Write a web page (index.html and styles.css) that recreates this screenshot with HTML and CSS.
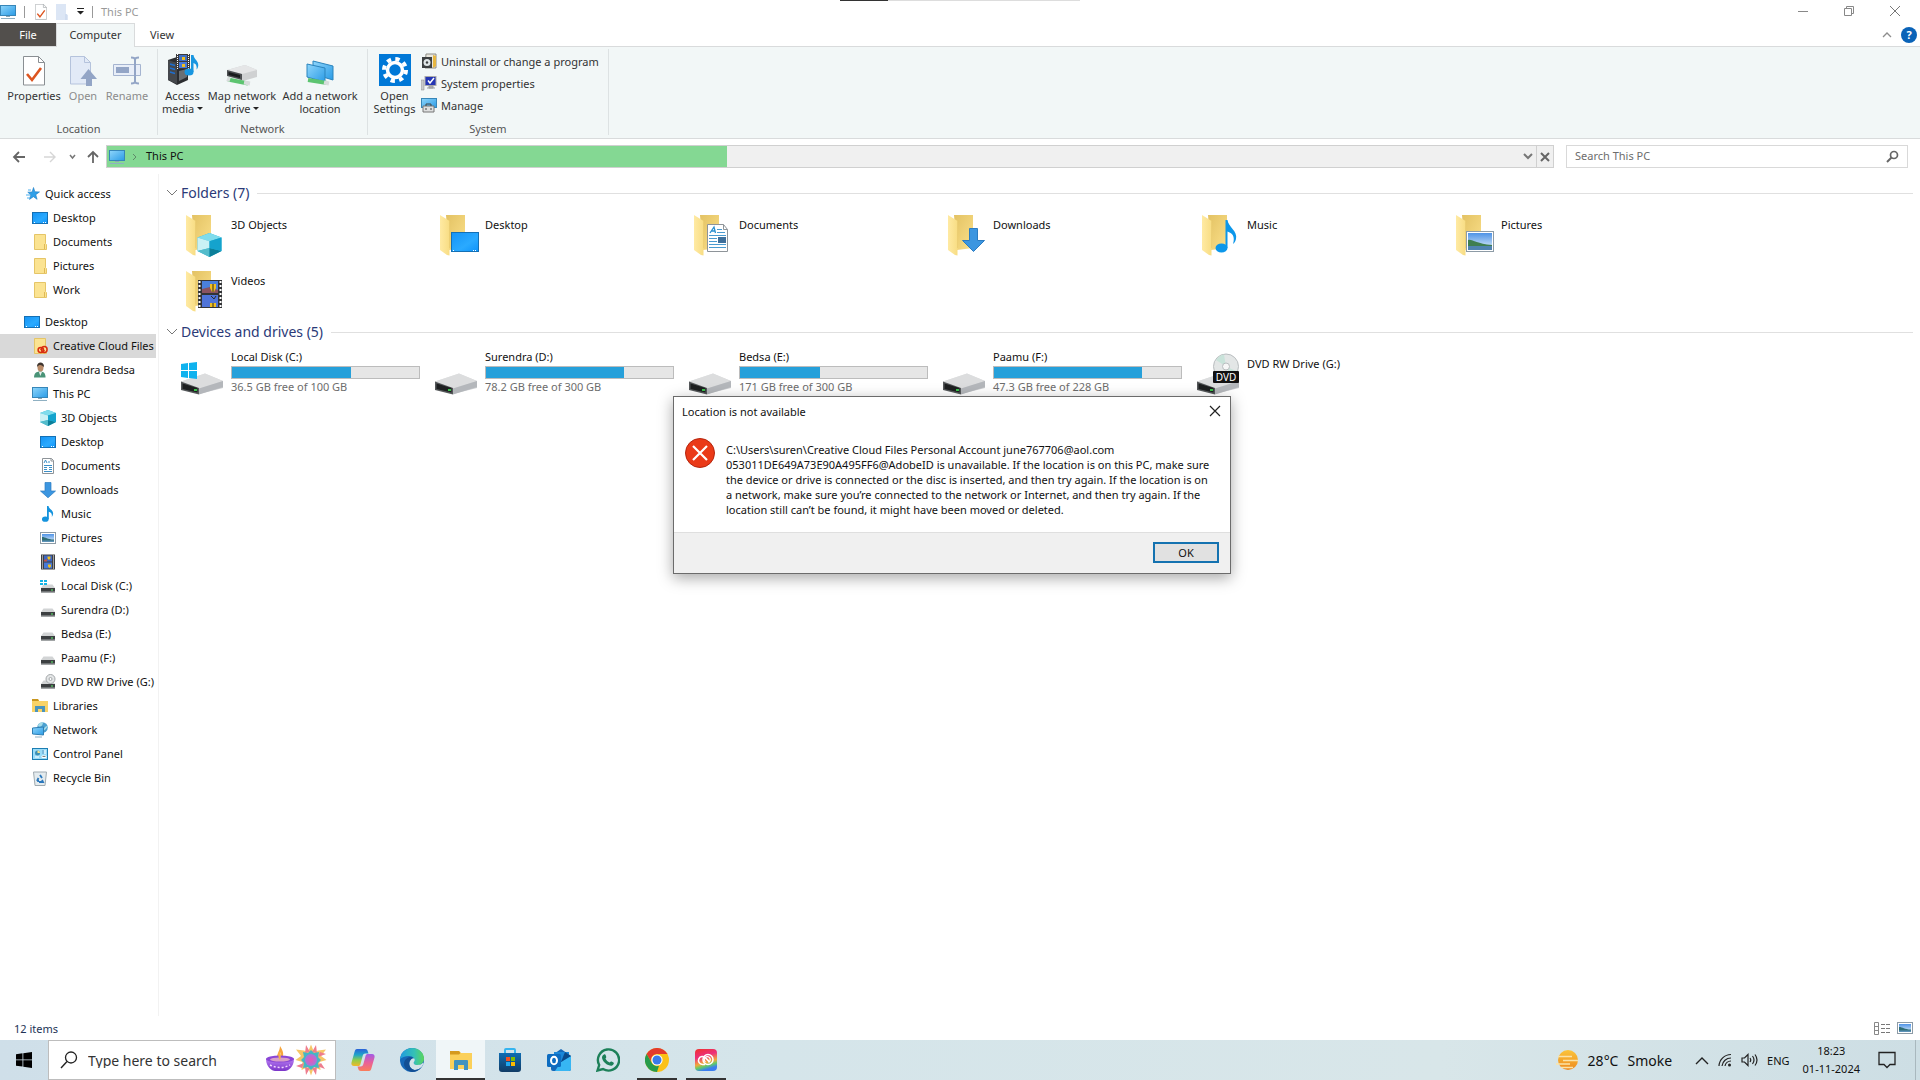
FILE: index.html
```
<!DOCTYPE html>
<html lang="en">
<head>
    <meta charset="UTF-8">
    <meta name="viewport" content="width=device-width, initial-scale=1.0">
    <title>This PC</title>
    <link rel="stylesheet" href="styles.css">
</head>
<body>

    <!-- ICON SPRITE -->
    <svg class="sprite" width="0" height="0" aria-hidden="true">
        <defs>
            <linearGradient id="gScreen" x1="0" y1="0" x2="1" y2="1"><stop offset="0" stop-color="#8fd6fb"/><stop offset="1" stop-color="#2a9be6"/></linearGradient>
            <linearGradient id="gDesk" x1="0" y1="0" x2="1" y2="1"><stop offset="0" stop-color="#1493f5"/><stop offset=".6" stop-color="#2aaaff"/><stop offset="1" stop-color="#0d93fb"/></linearGradient>
            <linearGradient id="gFront" x1="0" y1="0" x2="1" y2="0"><stop offset="0" stop-color="#ffeaa3"/><stop offset="1" stop-color="#f8dd84"/></linearGradient>
            <linearGradient id="gBack" x1="0" y1="0" x2="1" y2="1"><stop offset="0" stop-color="#e3c263"/><stop offset="1" stop-color="#fbe08a"/></linearGradient>
            <linearGradient id="gDrive" x1="0" y1="0" x2="1" y2="1"><stop offset="0" stop-color="#efefef"/><stop offset="1" stop-color="#c3c5c9"/></linearGradient>
            <linearGradient id="gSky" x1="0" y1="0" x2="0" y2="1"><stop offset="0" stop-color="#4f93e6"/><stop offset="1" stop-color="#e4f2fb"/></linearGradient>
            <linearGradient id="gEdge" x1="0" y1="0" x2="1" y2="0"><stop offset="0" stop-color="#1f9be0"/><stop offset=".6" stop-color="#35c1b5"/><stop offset="1" stop-color="#5bd65a"/></linearGradient>
            <linearGradient id="gStore" x1="0" y1="0" x2="0" y2="1"><stop offset="0" stop-color="#0f6cb2"/><stop offset="1" stop-color="#123c66"/></linearGradient>
            <linearGradient id="gCopA" x1="0" y1="0" x2="0" y2="1"><stop offset="0" stop-color="#2a62d8"/><stop offset=".35" stop-color="#1fa6c9"/><stop offset=".65" stop-color="#8fce4a"/><stop offset="1" stop-color="#f2b82a"/></linearGradient>
            <linearGradient id="gCopB" x1="0" y1="0" x2="0" y2="1"><stop offset="0" stop-color="#a25be6"/><stop offset=".5" stop-color="#e8609a"/><stop offset="1" stop-color="#fa7d5a"/></linearGradient>
            <linearGradient id="gCC" x1="0" y1="0" x2=".3" y2="1"><stop offset="0" stop-color="#f0322c"/><stop offset=".4" stop-color="#ec2f7c"/><stop offset=".7" stop-color="#f2a83a"/><stop offset=".85" stop-color="#5ecb6b"/><stop offset="1" stop-color="#3a7df0"/></linearGradient>
            <linearGradient id="gDiya" x1="0" y1="0" x2="0" y2="1"><stop offset="0" stop-color="#b77df2"/><stop offset="1" stop-color="#7b35c9"/></linearGradient>
            <linearGradient id="gSun" x1="0" y1="0" x2="0" y2="1"><stop offset="0" stop-color="#fbc43c"/><stop offset="1" stop-color="#ee8a1d"/></linearGradient>
            <radialGradient id="gPetal"><stop offset="0" stop-color="#e957b4"/><stop offset="1" stop-color="#a775dd"/></radialGradient>
        </defs>

        <symbol id="i-pc" viewBox="0 0 16 16">
            <rect x=".5" y="1.500" width="15" height="10" fill="url(#gScreen)" stroke="#3786b8"/>
            <path d="M6 12h4v1H6z" fill="#8da6b3"/><path d="M1 14h14v1H1z" fill="#8fb0c2"/>
        </symbol>
        <symbol id="i-desktop" viewBox="0 0 16 16">
            <rect x=".5" y="2.500" width="15" height="11" fill="url(#gDesk)" stroke="#1470b5"/>
            <path d="M2 12h1v1H2zM11 12h1v1h-1zM13 12h1v1h-1z" fill="#fff"/>
        </symbol>
        <symbol id="i-folder" viewBox="0 0 16 16">
            <path d="M2.500.5h11v9l1 1v5h-12z" fill="#fbe391" stroke="#e5c567"/><path d="M12.500 10v5" stroke="#e0b955"/>
        </symbol>
        <symbol id="i-star" viewBox="0 0 16 16">
            <path d="M9.500 1.500l1.400 4.300 4.600.1-3.700 2.800 1.300 4.600-3.700-2.600-3.900 2.700 1.300-4.500-3-2.700 4.300-.2z" fill="#2f9fe8" stroke="#1d7cc4" stroke-width=".6"/>
            <path d="M4 4h3M2 9h4M3 12h3" stroke="#4fb0ee"/>
        </symbol>
        <symbol id="i-ccfolder" viewBox="0 0 16 16">
            <path d="M2.500.5h11v9l1 1v5h-12z" fill="#fbe391" stroke="#e5c567"/>
            <ellipse cx="8.800" cy="12" rx="2.700" ry="2.500" fill="none" stroke="#d92c10" stroke-width="1.500"/><ellipse cx="12.300" cy="11.500" rx="2.800" ry="3" fill="none" stroke="#d92c10" stroke-width="1.500"/><path d="M8 11l5 2" stroke="#d92c10"/>
        </symbol>
        <symbol id="i-user" viewBox="0 0 16 16">
            <path d="M2 15.500c0-4 2-6 6-6s5.500 2 5.500 6z" fill="#4a9478"/><path d="M7 10l1.300 4L10 10z" fill="#e8f0ec"/>
            <ellipse cx="8.500" cy="5.500" rx="3" ry="4" fill="#b98b68"/><path d="M5 5c-.5-6 7.500-6 7 0-1.500-1-2-2-4-2-1.500 0-2 1-3 2z" fill="#3f352f"/>
        </symbol>
        <symbol id="i-cube" viewBox="0 0 16 16">
            <path d="M8 0l8 3v9l-8 4-8-4V3z" fill="#2bb3d3"/><path d="M8 0l8 3-8 2.500L0 3z" fill="#7fdcec"/>
            <path d="M0 3l8 2.500V10l-8 2z" fill="#c9f1f5"/><path d="M0 12l8-2v6z" fill="#54bccb"/><path d="M8 10l8 2-8 4z" fill="#0c7f99"/>
            <path d="M8 5.500L16 3v9l-8-2z" fill="#15a3cd"/>
        </symbol>
        <symbol id="i-doc" viewBox="0 0 16 16">
            <path d="M2.500.5h9l2 2v13h-11z" fill="#fff" stroke="#8e9499"/><path d="M11 .5V3h2.500" fill="none" stroke="#8e9499"/>
            <path d="M4 5l1.500-3L7 5M8 4h2M4 7.500h8M4 9.500h3M9 9.500h3M4 11.500h3M9 11.500h3M4 13.500h8" fill="none" stroke="#3b8fc7"/>
        </symbol>
        <symbol id="i-down" viewBox="0 0 16 16">
            <path d="M5 .5h6V9h4.500L8 15.800.5 9H5z" fill="#3c96e0" stroke="#2b7cc2" stroke-width=".7"/>
        </symbol>
        <symbol id="i-note" viewBox="0 0 16 16">
            <ellipse cx="5.300" cy="13.200" rx="3.300" ry="2.600" fill="#1593dd"/><path d="M7 0h1.500c.5 3.500 5.500 4 4.500 8.500-.3 1.200-.8 1.800-1.300 2.400.8-3-.7-4.400-2.900-5.200V13H7z" fill="#1593dd"/>
        </symbol>
        <symbol id="i-picture" viewBox="0 0 16 16">
            <rect x=".5" y="2.500" width="15" height="11" fill="#fff" stroke="#8d9ba6"/><rect x="2" y="4" width="12" height="8" fill="url(#gSky)"/>
            <path d="M2 7c4 0 5 2.500 12 2.500V12H2z" fill="#2f6d75"/><path d="M2 10.500h12V12H2z" fill="#5d93b8"/>
        </symbol>
        <symbol id="i-film" viewBox="0 0 16 16">
            <rect x="1" y=".5" width="14" height="15" fill="#3f4043"/><rect x="4" y="1.500" width="8" height="6" fill="#3d67c4"/><rect x="4" y="8.500" width="8" height="6" fill="#4779d8"/>
            <path d="M2.500 1.500v14M13.500 1.500v14" stroke="#fff" stroke-dasharray="1 1"/>
            <path d="M7.500 2.500h3v2l-1.500 1.500-1.500-1.500zM8 10.500h3v2l-1.500 1.500L8 12.500z" fill="#f0bf1e"/><path d="M4 6l3-1v2.500H4z" fill="#c0524a"/>
        </symbol>
        <symbol id="i-hdd" viewBox="0 0 16 16">
            <path d="M3.500 6.500h9l2.500 3.500H1z" fill="#d2d4d5"/><rect x="1" y="10" width="14" height="4.500" fill="#3c3f41"/><rect x="1" y="13.500" width="14" height="1" fill="#a7abad"/><rect x="11" y="11.500" width="2" height="1" fill="#5df06c"/>
        </symbol>
        <symbol id="i-oshdd" viewBox="0 0 16 16">
            <use href="#i-hdd"/><path d="M0 2h3v2H0zM4 2h3v2H4zM0 5h3v2H0zM4 5h3v2H4z" fill="#15b4e6"/>
        </symbol>
        <symbol id="i-dvdhdd" viewBox="0 0 16 16">
            <use href="#i-hdd"/><circle cx="10.500" cy="5" r="4.500" fill="#e4e6e7" stroke="#a4a8aa"/><circle cx="10.500" cy="5" r="1.500" fill="#fff" stroke="#a4a8aa"/>
        </symbol>
        <symbol id="i-libraries" viewBox="0 0 16 16">
            <path d="M0 1h6l1 2h9v11H0z" fill="#f9d367"/><path d="M0 1h6l1 2H0z" fill="#c8961e"/><path d="M3 8h10v6h-3v-3H6v3H3z" fill="#4a94bd"/>
        </symbol>
        <symbol id="i-network" viewBox="0 0 16 16">
            <circle cx="10.500" cy="5.500" r="5.300" fill="#4ba0cf"/><path d="M6 4c3 2 5-1 5-3.800C8 0 6 2 6 4zM11 9c2-1 4-3 4.500-5-2 0-4 2-4.500 5z" fill="#a6dbe8"/>
            <path d="M.5 6l11-1v8l-11-1z" fill="url(#gScreen)" stroke="#2f7fb4"/><path d="M3 15h7" stroke="#8fb0c2"/>
        </symbol>
        <symbol id="i-control" viewBox="0 0 16 16">
            <rect x=".5" y="2.500" width="15" height="11" fill="#9adcf8" stroke="#1c7eb3"/><circle cx="5.500" cy="7" r="2.500" fill="#3b8fb5"/><path d="M5.500 7V4.500A2.500 2.500 0 0 1 8 7z" fill="#f6e38b"/>
            <path d="M10 5h4M10 7h4M3 11h4M10 10h4v1.500h-4z" stroke="#fff"/><path d="M11 4v4" stroke="#2a86bd"/>
        </symbol>
        <symbol id="i-bin" viewBox="0 0 16 16">
            <path d="M1.500 2h13l-1.500 13.500H3z" fill="#e4ebee" stroke="#9faab0"/><path d="M8 5l2 3M5 11l1.500-3M7 12h4l-1-2M5 11h2" stroke="#2a78bd" stroke-width="1.800" fill="none"/>
        </symbol>

        <!-- big tile icons -->
        <symbol id="b-folder" viewBox="0 0 48 48">
            <path d="M12 3h19v33l-16 2z" fill="url(#gBack)"/><path d="M6 3l9.500 6v34.500L13 43 6 38z" fill="url(#gFront)"/><path d="M15.500 9v27" stroke="#e9cb70" stroke-width=".7"/>
        </symbol>
        <symbol id="b-drive" viewBox="0 3 48 48">
            <path d="M1 33.500L25 25.500l18 7.500v7L19 46 1 41z" fill="url(#gDrive)"/><path d="M1 33.500L25 25.500l18 7.500-24 7.500z" fill="#dcddde"/>
            <path d="M19 40.500l24-7.500v6L19 46.500z" fill="#b4b7bb"/><path d="M1 33.500l18 6.500v6.500L1 42z" fill="#55585a"/><path d="M2.500 35.500L17.500 40v4.500l-15-3.500z" fill="#1d1f20"/><rect x="14" y="41" width="3" height="2" fill="#39c24a"/>
        </symbol>

        <symbol id="i-error" viewBox="0 0 30 30">
            <circle cx="15" cy="15" r="14.500" fill="#ea3a18" stroke="#b5260e"/><path d="M8 8l14 14M22 8L8 22" stroke="#fff" stroke-width="2.200"/>
        </symbol>
        <symbol id="i-docheck" viewBox="0 0 22 30">
            <path d="M.5.5h15l6 6v22.500H.5z" fill="#fff" stroke="#8a8f93"/><path d="M15.500.5v6h6" fill="none" stroke="#8a8f93"/><path d="M4 18l5 6 9-12" fill="none" stroke="#dd5520" stroke-width="2.600"/>
        </symbol>
    </svg>

    <div class="screen">

        <div class="top-strip"><span></span></div>

        <!-- TITLE BAR -->
        <header class="titlebar">
            <div class="quick-bar">
                <svg class="i16"><use href="#i-pc"/></svg>
                <i class="vline"></i>
                <button class="plain" aria-label="Properties"><svg width="12" height="16" viewBox="0 0 22 30"><use href="#i-docheck"/></svg></button>
                <button class="plain" aria-label="New folder"><svg width="14" height="16" viewBox="0 0 14 16"><path d="M1 0h10v10l2 1v5H1z" fill="#dce6f5"/><path d="M11 10v6" stroke="#c3d2ea"/></svg></button>
                <button class="plain" aria-label="Customise"><svg width="7" height="7" viewBox="0 0 7 7"><path d="M0 0h7v1H0zM0 3h7L3.500 6.500z" fill="#222"/></svg></button>
                <i class="vline"></i>
                <span class="window-title">This PC</span>
            </div>
            <div class="window-buttons">
                <button class="plain" aria-label="Minimise"><svg width="12" height="12" viewBox="0 0 12 12"><path d="M1 6.500h10" stroke="#888"/></svg></button>
                <button class="plain" aria-label="Restore"><svg width="12" height="12" viewBox="0 0 12 12"><path d="M1.500 3.500h7v7h-7zM3.500 3.500v-2h7v7h-2" fill="none" stroke="#888"/></svg></button>
                <button class="plain" aria-label="Close"><svg width="12" height="12" viewBox="0 0 12 12"><path d="M1 1l10 10M11 1L1 11" stroke="#777"/></svg></button>
            </div>
        </header>

        <!-- TABS -->
        <div class="tabs">
            <button class="tab file">File</button>
            <button class="tab active">Computer</button>
            <button class="tab">View</button>
            <div class="tab-tools">
                <button class="plain" aria-label="Collapse ribbon"><svg width="10" height="6" viewBox="0 0 10 6"><path d="M1 5l4-4 4 4" fill="none" stroke="#8d8d8d" stroke-width="1.300"/></svg></button>
                <button class="help" aria-label="Help">?</button>
            </div>
        </div>

        <!-- RIBBON -->
        <div class="ribbon">
            <section class="group location">
                <div class="group-items">
                    <button class="big w-properties"><svg width="22" height="32" viewBox="0 0 22 32"><use href="#i-docheck" y="2" width="22" height="30"/></svg><span>Properties</span></button>
                    <button class="big w-open" disabled><svg width="28" height="32" viewBox="0 0 28 32"><path d="M1.500 2.500h14l6 6v21.500h-20z" fill="#e2eaf7" stroke="#b5c3dc"/><path d="M15.500 2.500v6h6" fill="none" stroke="#b5c3dc"/><path d="M19.500 15l8.500 10h-5v7h-6v-7h-5.500z" fill="#93a5c6"/></svg><span>Open</span></button>
                    <button class="big w-rename" disabled><svg width="28" height="32" viewBox="0 0 28 32"><path d="M.5 10.500h27v11H.5z" fill="#e8eef8" stroke="#a5b4d0"/><path d="M3 13h13v6H3z" fill="#93a5c6"/><path d="M22 5v24M18 3.500c2 0 4 .5 4 2 0-1.500 2-2 4-2M18 29.500c2 0 4-.5 4-2 0 1.500 2 2 4 2" fill="none" stroke="#93a5c6" stroke-width="2"/></svg><span>Rename</span></button>
                </div>
                <h2>Location</h2>
            </section>
            <section class="group network">
                <div class="group-items">
                    <button class="big w-access">
                        <svg width="32" height="32" viewBox="0 0 32 32"><path d="M1 6l12-4 8 2v22l-11 5-9-5z" fill="#2b2d30"/><path d="M1 6l9 3v21l-9-4z" fill="#45484c"/><path d="M3 10l5 1.500M3 14l5 1.500M3 18l5 1.500" stroke="#1f6fd0" stroke-width="1.500"/><path d="M12 17l8-2v8l-8 4z" fill="#6b6f73"/><rect x="9" y="0" width="14" height="15" fill="#3a3a3c"/><path d="M10.500 0v15M21.500 0v15" stroke="#fff" stroke-dasharray="1 1"/><rect x="12" y="1" width="8" height="6" fill="#3f6fc0"/><rect x="12" y="8" width="8" height="6" fill="#4779d8"/><path d="M15 3h3v3h-3zM15 10h3v3h-3z" fill="#efbf1e"/><ellipse cx="22" cy="18" rx="4.500" ry="3.500" fill="#1996e0"/><path d="M24 1h2.500c.5 5 6 6 4.500 12-.3 1-.8 2-1.500 2.500.6-4-.5-5.500-3-6.500v9H24z" fill="#1996e0"/></svg>
                        <span>Access<br>media <i class="caret"></i></span>
                    </button>
                    <button class="big w-map">
                        <svg width="32" height="32" viewBox="0 0 32 32"><path d="M1 16l18-5 12 5v7l-14 4L1 22z" fill="#cfd1d2"/><path d="M1 16l18-5 12 5-15 4z" fill="#e5e6e7"/><path d="M1 16l15 4v6L1 22z" fill="#4c4f51"/><path d="M2.500 18L14 21v3l-11.500-3z" fill="#191b1c"/><path d="M2 25.500l20 4" stroke="#5cc470" stroke-width="4"/><path d="M1 25l3 1M18 28.500l6 1" stroke="#d8dcdc" stroke-width="4"/></svg>
                        <span>Map network<br>drive <i class="caret"></i></span>
                    </button>
                    <button class="big w-add">
                        <svg width="30" height="32" viewBox="0 0 30 32"><path d="M8 7l20 5v14L8 20z" fill="url(#gScreen)" stroke="#2b84bd"/><path d="M2 10l18 4v14L2 23z" fill="url(#gScreen)" stroke="#2b84bd"/><path d="M3 26l19 3" stroke="#5cc470" stroke-width="4"/><path d="M19 28.500l5 1" stroke="#d8dcdc" stroke-width="4"/></svg>
                        <span>Add a network<br>location</span>
                    </button>
                </div>
                <h2>Network</h2>
            </section>
            <section class="group system">
                <div class="group-items">
                    <button class="big w-settings">
                        <svg width="32" height="32" viewBox="0 0 32 32"><rect width="32" height="32" fill="#0078d7"/><circle cx="16" cy="16" r="7.500" fill="none" stroke="#fff" stroke-width="3.500"/><circle cx="16" cy="16" r="11" fill="none" stroke="#fff" stroke-width="4" stroke-dasharray="4.320 4.320"/></svg>
                        <span>Open<br>Settings</span>
                    </button>
                    <div class="small-list">
                        <button class="small"><svg class="i16" viewBox="0 0 16 16"><path d="M5 1h10v14H4z" fill="#e9e7de" stroke="#8d8d86"/><path d="M12 2l3 1v10l-3 2z" fill="#e7b741"/><rect x="1" y="4" width="10" height="11" fill="#3c3f40"/><circle cx="6" cy="9.500" r="3.500" fill="#dfe5e6"/><circle cx="6" cy="9.500" r="1.200" fill="#3c3f40"/></svg>Uninstall or change a program</button>
                        <button class="small"><svg class="i16" viewBox="0 0 16 16"><path d="M0 5h3v10H0z" fill="#c9cbcc" stroke="#888" stroke-width=".5"/><rect x="4" y="1.500" width="11" height="9" fill="#2436b4" stroke="#aaa"/><path d="M7 5.500l2 2.500 4-5" fill="none" stroke="#fff" stroke-width="1.500"/><path d="M6 13h8M8 11h4v2H8z" stroke="#9a9da0" fill="#bbb"/></svg>System properties</button>
                        <button class="small"><svg class="i16" viewBox="0 0 16 16"><rect x=".5" y="1.500" width="15" height="9" fill="url(#gScreen)" stroke="#3786b8"/><path d="M2 9h11v6H2z" fill="#dedfdf" stroke="#777"/><path d="M5 9V7h5v2M5 11v2M10 11v2" fill="none" stroke="#444"/></svg>Manage</button>
                    </div>
                </div>
                <h2>System</h2>
            </section>
        </div>

        <!-- ADDRESS ROW -->
        <div class="address-row">
            <div class="nav-buttons">
                <button class="plain" aria-label="Back"><svg width="14" height="12" viewBox="0 0 14 12"><path d="M13 6H2M7 1L2 6l5 5" fill="none" stroke="#666" stroke-width="1.800"/></svg></button>
                <button class="plain" aria-label="Forward" disabled><svg width="14" height="12" viewBox="0 0 14 12"><path d="M1 6h11M7 1l5 5-5 5" fill="none" stroke="#d6d6d6" stroke-width="1.400"/></svg></button>
                <button class="plain" aria-label="Recent"><svg width="7" height="6" viewBox="0 0 7 6"><path d="M1 1l2.500 3L6 1" fill="none" stroke="#777" stroke-width="1.500"/></svg></button>
                <button class="plain" aria-label="Up"><svg width="12" height="14" viewBox="0 0 12 14"><path d="M6 13V2M1 7l5-5 5 5" fill="none" stroke="#666" stroke-width="1.800"/></svg></button>
            </div>
            <div class="address">
                <div class="progress" style="width: 42.900%"></div>
                <svg class="i16"><use href="#i-pc"/></svg>
                <svg width="5" height="8" viewBox="0 0 5 8"><path d="M1 1l3 3-3 3" fill="none" stroke="#5f8a69"/></svg>
                <a href="#">This PC</a>
                <button class="plain drop" aria-label="Previous locations"><svg width="10" height="7" viewBox="0 0 10 7"><path d="M1 1l4 4 4-4" fill="none" stroke="#777" stroke-width="2"/></svg></button>
                <button class="plain stop" aria-label="Stop"><svg width="10" height="10" viewBox="0 0 10 10"><path d="M1 1l8 8M9 1L1 9" stroke="#666" stroke-width="2"/></svg></button>
            </div>
            <div class="find">
                <input type="text" placeholder="Search This PC" aria-label="Search This PC">
                <svg width="13" height="13" viewBox="0 0 13 13"><circle cx="8" cy="5" r="3.500" fill="none" stroke="#666" stroke-width="1.700"/><path d="M5.500 7.500L1 12" stroke="#666" stroke-width="2"/></svg>
            </div>
        </div>

        <div class="body">
            <!-- NAVIGATION PANE -->
            <nav class="sidebar">
                <ul>
                    <li><a href="#"><svg class="i16"><use href="#i-star"/></svg>Quick access</a></li>
                    <li class="l1"><a href="#"><svg class="i16"><use href="#i-desktop"/></svg>Desktop</a></li>
                    <li class="l1"><a href="#"><svg class="i16"><use href="#i-folder"/></svg>Documents</a></li>
                    <li class="l1"><a href="#"><svg class="i16"><use href="#i-folder"/></svg>Pictures</a></li>
                    <li class="l1"><a href="#"><svg class="i16"><use href="#i-folder"/></svg>Work</a></li>
                </ul>
                <ul>
                    <li><a href="#"><svg class="i16"><use href="#i-desktop"/></svg>Desktop</a></li>
                    <li class="l1 selected"><a href="#"><svg class="i16"><use href="#i-ccfolder"/></svg>Creative Cloud Files</a></li>
                    <li class="l1"><a href="#"><svg class="i16"><use href="#i-user"/></svg>Surendra Bedsa</a></li>
                    <li class="l1"><a href="#"><svg class="i16"><use href="#i-pc"/></svg>This PC</a></li>
                    <li class="l2"><a href="#"><svg class="i16"><use href="#i-cube"/></svg>3D Objects</a></li>
                    <li class="l2"><a href="#"><svg class="i16"><use href="#i-desktop"/></svg>Desktop</a></li>
                    <li class="l2"><a href="#"><svg class="i16"><use href="#i-doc"/></svg>Documents</a></li>
                    <li class="l2"><a href="#"><svg class="i16"><use href="#i-down"/></svg>Downloads</a></li>
                    <li class="l2"><a href="#"><svg class="i16"><use href="#i-note"/></svg>Music</a></li>
                    <li class="l2"><a href="#"><svg class="i16"><use href="#i-picture"/></svg>Pictures</a></li>
                    <li class="l2"><a href="#"><svg class="i16"><use href="#i-film"/></svg>Videos</a></li>
                    <li class="l2"><a href="#"><svg class="i16"><use href="#i-oshdd"/></svg>Local Disk (C:)</a></li>
                    <li class="l2"><a href="#"><svg class="i16"><use href="#i-hdd"/></svg>Surendra (D:)</a></li>
                    <li class="l2"><a href="#"><svg class="i16"><use href="#i-hdd"/></svg>Bedsa (E:)</a></li>
                    <li class="l2"><a href="#"><svg class="i16"><use href="#i-hdd"/></svg>Paamu (F:)</a></li>
                    <li class="l2"><a href="#"><svg class="i16"><use href="#i-dvdhdd"/></svg>DVD RW Drive (G:)</a></li>
                    <li class="l1"><a href="#"><svg class="i16"><use href="#i-libraries"/></svg>Libraries</a></li>
                    <li class="l1"><a href="#"><svg class="i16"><use href="#i-network"/></svg>Network</a></li>
                    <li class="l1"><a href="#"><svg class="i16"><use href="#i-control"/></svg>Control Panel</a></li>
                    <li class="l1"><a href="#"><svg class="i16"><use href="#i-bin"/></svg>Recycle Bin</a></li>
                </ul>
            </nav>

            <!-- CONTENT -->
            <main class="content">
                <h2 class="section-title"><svg width="12" height="8" viewBox="0 0 12 8"><path d="M1 1l5 5 5-5" fill="none" stroke="#777"/></svg>Folders (7)</h2>
                <div class="tiles">
                    <a class="tile" href="#"><svg viewBox="0 0 48 48"><use href="#b-folder"/><use href="#i-cube" x="17" y="21" width="25" height="24"/></svg><span>3D Objects</span></a>
                    <a class="tile" href="#"><svg viewBox="0 0 48 48"><use href="#b-folder"/><rect x="17.500" y="20.500" width="27" height="19" fill="url(#gDesk)" stroke="#1470b5"/><path d="M19 38h1v1h-1zM39 38h1v1h-1zM41 38h1v1h-1z" fill="#fff"/></svg><span>Desktop</span></a>
                    <a class="tile" href="#"><svg viewBox="0 0 48 48"><use href="#b-folder"/><path d="M19.500 12.500h16l4 5v22h-20z" fill="#fff" stroke="#8e9499"/><path d="M35.500 12.500v5h4" fill="none" stroke="#8e9499"/><path d="M22 21l4-6 1.500 6M23 19h4" fill="none" stroke="#2a8fcf" stroke-width="1.300"/><path d="M29 17.500h5M29 20.500h8M21 23.500h17M21 26.500h8M21 29.500h8M21 32.500h17M21 35.500h17" stroke="#4a9bd0"/><rect x="30" y="25" width="8" height="6" fill="#3f6f9a"/></svg><span>Documents</span></a>
                    <a class="tile" href="#"><svg viewBox="0 0 48 48"><use href="#b-folder"/><path d="M27.500 16.500h8v12h7L31.500 39.500l-11-11h7z" fill="#3c96e0" stroke="#2b7cc2"/></svg><span>Downloads</span></a>
                    <a class="tile" href="#"><svg viewBox="0 0 48 48"><use href="#b-folder"/><ellipse cx="25.500" cy="36" rx="6" ry="4.500" fill="#0c97ea"/><path d="M29.500 8h2c.7 7 10.500 11 8.500 19-.5 2-1.500 4-3 5 2.500-8-1-11-5.500-12.500V36h-2z" fill="#0c97ea"/></svg><span>Music</span></a>
                    <a class="tile" href="#"><svg viewBox="0 0 48 48"><use href="#b-folder"/><rect x="16.500" y="19.500" width="27" height="20" fill="#fff" stroke="#8d9ba6"/><rect x="18" y="21" width="24" height="17" fill="url(#gSky)"/><path d="M18 28c5-1 8 4 24 5v2H18z" fill="#3f7e50"/><path d="M18 34h24v4H18z" fill="#4f83b0"/></svg><span>Pictures</span></a>
                    <a class="tile" href="#"><svg viewBox="0 0 48 48"><use href="#b-folder"/><rect x="18" y="12" width="24" height="28" fill="#333436"/><path d="M19.500 13v27M40.500 13v27" stroke="#fff" stroke-width="2" stroke-dasharray="2 2"/><rect x="22" y="13" width="16" height="12" fill="#4a80dc"/><rect x="22" y="27" width="16" height="12" fill="#4f74d8"/><path d="M22 21l8-2 8 3v3H22z" fill="#8a5360"/><path d="M30 16h6v4l-2 4h-2l-2-4zM30 35h6v4h-6z" fill="#f0bf1e"/><path d="M33 16v8M33 35v4M31 28l3 3 2-3" stroke="#2b2b2b" fill="none"/></svg><span>Videos</span></a>
                </div>

                <h2 class="section-title"><svg width="12" height="8" viewBox="0 0 12 8"><path d="M1 1l5 5 5-5" fill="none" stroke="#777"/></svg>Devices and drives (5)</h2>
                <div class="tiles drives">
                    <a class="tile" href="#"><svg viewBox="0 0 48 48"><use href="#b-drive"/><path d="M1 13l7-1v7H1zM9 12l8-1v8H9zM1 20h7v7l-7-1zM9 20h8v8l-8-1z" fill="#0fb2ee"/></svg>
                        <div class="drive-info"><b>Local Disk (C:)</b><div class="meter"><i style="width: 63.500%"></i></div><small>36.5 GB free of 100 GB</small></div></a>
                    <a class="tile" href="#"><svg viewBox="0 0 48 48"><use href="#b-drive"/></svg>
                        <div class="drive-info"><b>Surendra (D:)</b><div class="meter"><i style="width: 73.700%"></i></div><small>78.2 GB free of 300 GB</small></div></a>
                    <a class="tile" href="#"><svg viewBox="0 0 48 48"><use href="#b-drive"/></svg>
                        <div class="drive-info"><b>Bedsa (E:)</b><div class="meter"><i style="width: 42.800%"></i></div><small>171 GB free of 300 GB</small></div></a>
                    <a class="tile" href="#"><svg viewBox="0 0 48 48"><use href="#b-drive"/></svg>
                        <div class="drive-info"><b>Paamu (F:)</b><div class="meter"><i style="width: 79%"></i></div><small>47.3 GB free of 228 GB</small></div></a>
                    <a class="tile" href="#"><svg viewBox="0 0 48 48"><use href="#b-drive"/><circle cx="30" cy="15.500" r="12.500" fill="#e3e6e6" stroke="#b9bdbf"/><path d="M30 15.500L20 9a12 12 0 0 1 8-5.500zM30 15.500l11 5a12 12 0 0 1-5 6z" fill="#c9e3da"/><circle cx="30" cy="15.500" r="3.500" fill="#f7f7f7" stroke="#b9bdbf"/><rect x="17" y="20" width="26" height="12" rx="1" fill="#111"/><text x="30" y="30" class="dvd-text">DVD</text></svg>
                        <span>DVD RW Drive (G:)</span></a>
                </div>
            </main>
        </div>

        <footer class="statusbar">
            <span>12 items</span>
            <div class="view-modes">
                <button class="plain" aria-label="Details"><svg width="17" height="13" viewBox="0 0 17 13"><path d="M.5.5h4v12h-4zM.5 4.500h4M.5 8.500h4" fill="none" stroke="#888"/><path d="M7 2.500h4M12 2.500h4M7 6.500h4M12 6.500h4M7 10.500h4M12 10.500h4" stroke="#777"/></svg></button>
                <button class="plain" aria-label="Large icons"><svg class="i16"><use href="#i-picture"/></svg></button>
            </div>
        </footer>

        <!-- TASKBAR -->
        <div class="taskbar">
            <button class="plain start" aria-label="Start"><svg width="16" height="16" viewBox="0 0 16 16"><path d="M0 2.200L6.500 1.300v6.200H0zM7.300 1.200L16 0v7.500H7.300zM0 8.300h6.500v6.300L0 13.700zM7.300 8.300H16V16l-8.700-1.200z" fill="#000"/></svg></button>
            <div class="task-search">
                <svg width="18" height="18" viewBox="0 0 18 18"><circle cx="11" cy="6.500" r="5.500" fill="none" stroke="#222" stroke-width="1.300"/><path d="M7 10.500L1 17" stroke="#222" stroke-width="1.400"/></svg>
                <input type="text" placeholder="Type here to search" aria-label="Type here to search">
                <svg width="30" height="30" viewBox="0 0 30 30"><path d="M15 1c3 5 5 9 1 14h-3c-3-5 2-8 2-14z" fill="#f7a53b"/><path d="M15 7c2 3 1.500 5 0 7-2-2-1-4 0-7z" fill="#ffe39a"/><path d="M1 14c0 8 6 12 9 12h10c3 0 9-4 9-12z" fill="url(#gDiya)"/><ellipse cx="15" cy="14" rx="14" ry="3.500" fill="#8a46d6"/><ellipse cx="15" cy="14.500" rx="10" ry="2" fill="#d9a0c8"/><path d="M14 6c2 3 2.500 5 1 9-2-2-2-6-1-9z" fill="#f9b24a"/><path d="M5 20q10 5 20 0" fill="none" stroke="#f4d6ff" stroke-width="1.500" stroke-dasharray="2 2"/></svg>
                <svg width="32" height="32" viewBox="-16 -16 32 32">
                    <path d="M0-15.500l3 7.500 4-1.500 8-1-5 6.500 5.500 4-7 2 1 8-6.500-3L0 15.500-3 7l-6.500 3 1-8-7-2 5.500-4-5-6.500 8 1 4 1.500z" fill="#f6c667"/>
                    <path d="M5-15l1 8-5-1zM15-6l-8 3 2-5zM14 9l-8-3 4-3zM-5 15l-1-8 5 1zM-15 6l8-3-2 5zM-5-15l-1 8 5-1zM5 15l1-8-5 1z" fill="#ee7d8e"/>
                    <path d="M0-10l3 3 5-1-1 5 3 3-3 3 1 5-5-1-3 3-3-3-5 1 1-5-3-3 3-3-1-5 5 1z" fill="#45b6c4"/><circle r="6" fill="url(#gPetal)"/>
                </svg>
            </div>
            <div class="apps">
                <button class="app" aria-label="Copilot"><svg viewBox="0 0 24 24"><path d="M6 1h8c2 0 2.500 1 3 3l.5 1.500h-3c-2 0-2.500 1-3 3L9.500 16c-.5 1.500-1 2-2.500 2H3c-2 0-3-1.500-2.500-3.500L3.500 4C4 2 4.500 1 6 1z" fill="url(#gCopA)"/><path d="M18 23h-8c-2 0-2.500-1-3-3l-.5-1.500h3c2 0 2.500-1 3-3L14.500 8c.5-1.500 1-2 2.500-2h4c2 0 3 1.500 2.500 3.500l-3 10.500c-.5 2-1 3-2.500 3z" fill="url(#gCopB)"/></svg></button>
                <button class="app" aria-label="Edge"><svg viewBox="0 0 24 24"><circle cx="12" cy="12" r="12" fill="#1668b8"/><path d="M0 11.500C.5 5 5.500 0 12 0c7 0 12 5 12 10.500 0 4-3 6.500-6.500 6.500-3 0-4.500-1.500-3.500-3 1.500-2.500-.5-6-5-6-4 0-7.500 1.500-9 3.500z" fill="url(#gEdge)"/><path d="M14 14c-1 1.500.5 3 3.500 3 2.300 0 4.200-.8 5.400-2.200l.6.700C22 20 18 22 14.500 22 9.500 21 8 15 10.500 12c1-1.500 2.500-2 3.700-1.500.8 1 .8 2.300-.2 3.500z" fill="#d5e4e9"/><path d="M10.500 12C8 15 9 20.500 14.500 22c2.500 0 5-.8 6.800-2.500A12 12 0 0 1 12 24C7 23 4 19.500 4 16s2.500-6 5.500-7c2.500 0 3.500 1 4.700 1.500-1.200-.5-2.700 0-3.700 1.500z" fill="#134f94"/></svg></button>
                <button class="app current" aria-label="File Explorer"><svg viewBox="0 0 24 24"><path d="M1 3h9l2 2h11v16H1z" fill="#fbd05a"/><path d="M1 3h9l1.500 2L10 6.500H1z" fill="#d59a1f"/><path d="M5 13q0-1 1-1h12q1 0 1 1v9h-4v-5H9v5H5z" fill="#4192be"/></svg></button>
                <button class="app" aria-label="Store"><svg viewBox="0 0 24 24"><path d="M7 6V2q0-1 1-1h8q1 0 1 1v4" fill="none" stroke="#35b4ef" stroke-width="2"/><path d="M1 5h22v16q0 3-3 3H4q-3 0-3-3z" fill="url(#gStore)"/><path d="M8 9h4v4H8z" fill="#f25022"/><path d="M13 9h4v4h-4z" fill="#7fba00"/><path d="M8 14h4v4H8z" fill="#21a7ef"/><path d="M13 14h4v4h-4z" fill="#ffb900"/></svg></button>
                <button class="app" aria-label="Outlook"><svg viewBox="0 0 24 24"><path d="M4 8l10-7 10 7v13q0 2-2 2H6q-2 0-2-2z" fill="#1568b8"/><path d="M7 4l15 0v9H7z" fill="#1a86d8"/><path d="M14 14l10-6v13q0 2-2 2H8z" fill="#37b6f3"/><path d="M14 14l10-6-6-4z" fill="#0b4a8a"/><rect x="0" y="6" width="14" height="13" rx="1.500" fill="#0d6cc0"/><ellipse cx="7" cy="12.500" rx="3" ry="3.700" fill="none" stroke="#fff" stroke-width="2"/></svg></button>
                <button class="app" aria-label="WhatsApp"><svg viewBox="0 0 24 24"><path d="M1.500 22.500l1.700-5.500A10.600 10.600 0 1 1 7 21z" fill="none" stroke="#1d8059" stroke-width="2.400"/><path d="M8 6.500c1-.5 1.500 0 2 1.500.6 1.500 0 2-.6 2.600 1 2 2.300 3.200 4.300 4 .8-1 1.300-1.400 2.300-.9 1.800.8 2 1 1.800 1.700-.5 2-2.500 2.600-4 2.200-4-1-7.300-4.300-7.800-7.800-.1-1.500.8-2.800 2-3.300z" fill="#1d8059"/></svg></button>
                <button class="app running" aria-label="Chrome"><svg viewBox="0 0 24 24"><circle cx="12" cy="12" r="12" fill="#fbc116"/><path d="M1.600 6A12 12 0 0 1 22.400 6H12a6 6 0 0 0-5.200 9z" fill="#e33b2e"/><path d="M1.600 6l5.200 9A6 6 0 0 0 14 17.700L12 24A12 12 0 0 1 1.600 6z" fill="#269b4b"/><circle cx="12" cy="12" r="5.600" fill="#fff"/><circle cx="12" cy="12" r="4.500" fill="#3a7bea"/></svg></button>
                <button class="app running" aria-label="Creative Cloud"><svg viewBox="0 0 24 24"><rect x="1" y="1" width="22" height="22" rx="4" fill="url(#gCC)"/><circle cx="14" cy="11.500" r="5" fill="none" stroke="#fff" stroke-width="1.500"/><path d="M11 16.500H8.500a4 4 0 1 1 3-6.600l4 4" fill="none" stroke="#fff" stroke-width="1.500"/><path d="M11.500 14a3 3 0 1 1 3 .3" fill="none" stroke="#fff" stroke-width="1.300"/></svg></button>
            </div>
            <div class="tray">
                <button class="weather">
                    <svg width="24" height="22" viewBox="0 0 24 22"><circle cx="13" cy="11" r="10" fill="url(#gSun)"/><path d="M3 7.500h14M8 11.500h15M1 15h14M6 18.500h12" stroke="#fbe3a8" stroke-width="1.300"/></svg>
                    <span>28°C</span><span>Smoke</span>
                </button>
                <button class="plain" aria-label="Hidden icons"><svg width="14" height="9" viewBox="0 0 14 9"><path d="M1 8l6-6 6 6" fill="none" stroke="#222" stroke-width="1.400"/></svg></button>
                <button class="plain" aria-label="Wi-Fi"><svg width="14" height="14" viewBox="0 0 14 14"><path d="M1 13A12 12 0 0 1 13 1.500M4 13a9 9 0 0 1 9-8M7 13a6 6 0 0 1 6-5" fill="none" stroke="#222" stroke-width="1.200"/><circle cx="11.500" cy="12" r="1.500" fill="#222"/></svg></button>
                <button class="plain" aria-label="Volume"><svg width="17" height="14" viewBox="0 0 17 14"><path d="M1 5h2.500L7 1.500v11L3.500 9H1z" fill="none" stroke="#222" stroke-width="1.200"/><path d="M9 5q1.500 2 0 4M11.500 3q3 4 0 8M14 1.500q4 5.500 0 11" fill="none" stroke="#222" stroke-width="1.200"/></svg></button>
                <button class="plain lang">ENG</button>
                <button class="plain clock">18:23<br>01-11-2024</button>
                <button class="plain" aria-label="Notifications"><svg width="18" height="18" viewBox="0 0 18 18"><path d="M1 1.500h16v12h-5L9 16.500l-3-3H1z" fill="none" stroke="#222" stroke-width="1.300"/></svg></button>
                <i class="show-desktop"></i>
            </div>
        </div>

        <!-- ERROR DIALOG -->
        <div class="dialog" role="alertdialog" aria-labelledby="dialogTitle">
            <div class="dialog-title">
                <span id="dialogTitle">Location is not available</span>
                <button class="plain" aria-label="Close"><svg width="12" height="12" viewBox="0 0 12 12"><path d="M1 1l10 10M11 1L1 11" stroke="#222" stroke-width="1.200"/></svg></button>
            </div>
            <div class="dialog-body">
                <svg width="30" height="30"><use href="#i-error"/></svg>
                <p>C:\Users\suren\Creative Cloud Files Personal Account june767706@aol.com 053011DE649A73E90A495FF6@AdobeID is unavailable. If the location is on this PC, make sure the device or drive is connected or the disc is inserted, and then try again. If the location is on a network, make sure you’re connected to the network or Internet, and then try again. If the location still can’t be found, it might have been moved or deleted.</p>
            </div>
            <div class="dialog-footer"><button class="ok">OK</button></div>
        </div>

    </div>

</body>
</html>
```
FILE: styles.css
```
* {
    box-sizing: border-box;
}
body {
    margin: 0;
    background: #fff;
    color: #111;
    font-family: "Noto Sans", "Open Sans", sans-serif;
    font-size: 11px;
    line-height: 15px;
}
a {
    color: inherit;
    text-decoration: none;
}
ul {
    list-style: none;
    margin: 0;
    padding: 0;
}
h2 {
    margin: 0;
    font-weight: normal;
}
button, input {
    font: inherit;
    color: inherit;
}
button {
    border: 0;
    padding: 0;
    background: none;
}
svg {
    display: block;
    flex: none;
}
.sprite {
    position: absolute;
}
.i16 {
    width: 16px;
    height: 16px;
}
.plain {
    display: flex;
    align-items: center;
    justify-content: center;
}
.screen {
    position: relative;
    display: flex;
    flex-direction: column;
    min-height: 100vh;
}
/* thin bar over the top edge */
.top-strip {
    position: absolute;
    top: 0;
    left: 50%;
    width: 240px;
    height: 1px;
    margin-left: -120px;
    background: #ddd;
}
.top-strip span {
    display: block;
    width: 48px;
    height: 1px;
    background: #333;
}

/* title bar */
.titlebar {
    display: flex;
    justify-content: space-between;
    height: 23px;
}
.quick-bar {
    display: flex;
    align-items: center;
    gap: 8px;
}
.vline {
    width: 1px;
    height: 12px;
    margin-right: 2px;
    background: #999;
}
.window-title {
    margin-left: -2px;
    color: #999;
}
.window-buttons {
    display: flex;
    align-items: center;
    gap: 34px;
    padding-right: 19px;
    padding-bottom: 2px;
}

/* tabs */
.tabs {
    display: flex;
    height: 24px;
    border-bottom: 1px solid #d9dbdc;
}
.tab {
    padding: 0 15px;
    color: #333;
}
.tab.file {
    width: 56px;
    background: #524f4c;
    color: #fff;
}
.tab.active {
    width: 79px;
    margin-bottom: -1px;
    padding: 0 0 2px;
    border: 1px solid #d9dbdc;
    border-bottom: 0;
    background: #f2f7f7;
}
.tab-tools {
    display: flex;
    align-items: center;
    gap: 9px;
    margin-left: auto;
    padding-right: 3px;
}
.help {
    width: 16px;
    height: 16px;
    border-radius: 50%;
    background: #0a63b8;
    color: #fff;
    font-weight: bold;
    text-align: center;
}

/* ribbon */
.ribbon {
    display: flex;
    padding: 2px 0 3px;
    border-bottom: 1px solid #d9dbdc;
    background: #f2f7f7;
}
.group {
    display: flex;
    flex-direction: column;
    height: 86px;
    border-right: 1px solid #dde2e3;
}
.group-items {
    display: flex;
    flex: 1;
}
.group h2 {
    color: #555;
    font-size: 11px;
    line-height: 12px;
    text-align: center;
}
.location .group-items {
    padding: 0 5px 0 4px;
}
.network .group-items {
    padding-right: 4px;
}
.big {
    display: flex;
    flex-direction: column;
    align-items: center;
    gap: 3px;
    padding-top: 5px;
    color: #333;
    line-height: 13px;
    white-space: nowrap;
}
.big:disabled {
    color: #8b8b8b;
}
.w-properties { width: 60px; }
.w-open { width: 38px; }
.w-rename { width: 50px; }
.w-access { width: 49px; }
.w-map { width: 70px; }
.w-add { width: 86px; }
.w-settings { width: 53px; }
.caret {
    display: inline-block;
    border: 3px solid transparent;
    border-top-color: #222;
    border-bottom: 0;
    vertical-align: 3px;
}
.small-list {
    padding: 1px 9px 0 0;
}
.small {
    display: flex;
    align-items: center;
    gap: 4px;
    height: 22px;
    color: #333;
    white-space: nowrap;
}

/* address row */
.address-row {
    display: flex;
    padding: 6px 12px 6px 0;
}
.nav-buttons {
    display: flex;
    align-items: center;
    justify-content: space-between;
    width: 106px;
    padding: 0 7px 0 12px;
}
.nav-buttons .plain:nth-child(2) {
    margin: 0 -4px 0 0;
}
.nav-buttons .plain:nth-child(4) {
    margin-left: -6px;
}
.address {
    position: relative;
    display: flex;
    flex: 1;
    align-items: center;
    height: 23px;
    padding: 0 0 0 2px;
    border: 1px solid #d0d0d0;
    background: #f0f0f0;
}
/* loading bar lies under the breadcrumb */
.progress {
    position: absolute;
    top: 0;
    bottom: 0;
    left: 0;
    background: #84d893;
}
.address > svg, .address > a {
    position: relative;
}
.address .i16 {
    margin-right: 7px;
}
.address a {
    margin-left: 9px;
    padding-bottom: 2px;
}
.drop {
    margin-left: auto;
    width: 16px;
}
.stop {
    align-self: stretch;
    width: 17px;
    border-left: 1px solid #d0d0d0;
}
.find {
    display: flex;
    align-items: center;
    width: 342px;
    height: 23px;
    margin-left: 12px;
    padding-right: 8px;
    border: 1px solid #d9d9d9;
}
.find input {
    flex: 1;
    min-width: 0;
    padding: 0 8px 2px;
    border: 0;
    outline: 0;
}
.find input::placeholder {
    color: #6d6d6d;
}

/* panes */
.body {
    display: flex;
    flex: 1;
}
.sidebar {
    width: 159px;
    padding: 8px 2px 0 0;
    border-right: 1px solid #f2f2f2;
}
.sidebar ul + ul {
    margin-top: 8px;
}
.sidebar a {
    display: flex;
    align-items: center;
    gap: 5px;
    height: 24px;
    padding: 0 0 2px 24px;
    overflow: hidden;
    white-space: nowrap;
}
.sidebar svg {
    margin-top: 2px;
}
.sidebar .l1 a {
    padding-left: 32px;
}
.sidebar .l2 a {
    padding-left: 40px;
}
.sidebar .selected {
    background: #d9d9d9;
}
.content {
    flex: 1;
    padding: 9px 7px 0;
}
.section-title {
    display: flex;
    align-items: center;
    gap: 3px;
    margin-bottom: 9px;
    color: #2b3a78;
    font-size: 14px;
    line-height: 20px;
}
.section-title::after {
    content: "";
    flex: 1;
    height: 1px;
    margin-left: 5px;
    background: #e0e0e0;
}
.tiles {
    display: grid;
    grid-template-columns: repeat(auto-fill, 254px);
    gap: 8px 0;
    margin: 0 0 6px 14px;
}
.tile {
    display: flex;
    gap: 3px;
}
.tile > svg {
    width: 48px;
    height: 48px;
}
.tile > span {
    padding-top: 5px;
}
.drive-info {
    width: 189px;
}
.drive-info b, .drive-info small {
    display: block;
    font-size: 11px;
    font-weight: normal;
}
.drive-info b {
    padding-bottom: 3px;
    line-height: 12px;
}
.drive-info small {
    color: #6d6d6d;
}
.meter {
    height: 13px;
    border: 1px solid #bcbcbc;
    background: #e6e6e6;
}
.meter i {
    display: block;
    height: 100%;
    background: #26a0da;
}
.dvd-text {
    fill: #fff;
    font-size: 10px;
    text-anchor: middle;
}

/* status bar */
.statusbar {
    display: flex;
    align-items: center;
    justify-content: space-between;
    height: 24px;
    padding: 0 7px 0 14px;
    color: #223355;
}
.view-modes {
    display: flex;
    gap: 6px;
}

/* taskbar */
.taskbar {
    display: flex;
    height: 40px;
    background: linear-gradient(90deg, #cfdfe9, #d5e5ea 40%, #d8e6e9 75%, #cddee4);
}
.start {
    width: 48px;
}
.task-search {
    display: flex;
    align-items: center;
    width: 288px;
    padding: 0 8px 0 11px;
    border: 1px solid #bdbdbd;
    background: #fff;
}
.task-search input {
    flex: 1;
    min-width: 0;
    padding: 0 10px;
    border: 0;
    outline: 0;
    font-size: 14px;
}
.task-search input::placeholder {
    color: #333;
}
.apps {
    display: flex;
    padding-left: 2px;
}
.app {
    display: flex;
    align-items: center;
    justify-content: center;
    width: 49px;
}
.app svg {
    width: 24px;
    height: 24px;
}
.app.current {
    background: #f0f6f8;
    box-shadow: inset 0 -2px #333;
}
.app.running {
    background: linear-gradient(#333, #333) center bottom / 40px 2px no-repeat;
}
.tray {
    display: flex;
    align-items: center;
    gap: 9px;
    margin-left: auto;
}
.weather {
    display: flex;
    align-items: center;
    gap: 9px;
    margin-right: 14px;
    font-size: 14px;
}
.clock {
    padding: 0 9px 0 4px;
    line-height: 18px;
}
.show-desktop {
    align-self: stretch;
    width: 5px;
    margin-left: 10px;
    border-left: 1px solid #a9b8be;
}

/* dialog */
.dialog {
    position: absolute;
    top: 396px;
    left: 673px;
    width: 558px;
    border: 1px solid #6b6b6b;
    background: #fff;
    box-shadow: 0 4px 14px rgba(0, 0, 0, 0.35);
}
.dialog-title {
    display: flex;
    align-items: center;
    justify-content: space-between;
    height: 28px;
    padding: 0 9px 0 8px;
}
.dialog-body {
    display: flex;
    gap: 11px;
    padding: 13px 16px 15px 11px;
}
.dialog-body p {
    margin: 4px 0 0;
    line-height: 15px;
}
.dialog-footer {
    display: flex;
    justify-content: flex-end;
    padding: 9px 11px 10px;
    border-top: 1px solid #dfdfdf;
    background: #f0f0f0;
}
.ok {
    width: 66px;
    height: 21px;
    border: 2px solid #1472b0;
    background: #e1e1e1;
}
```
